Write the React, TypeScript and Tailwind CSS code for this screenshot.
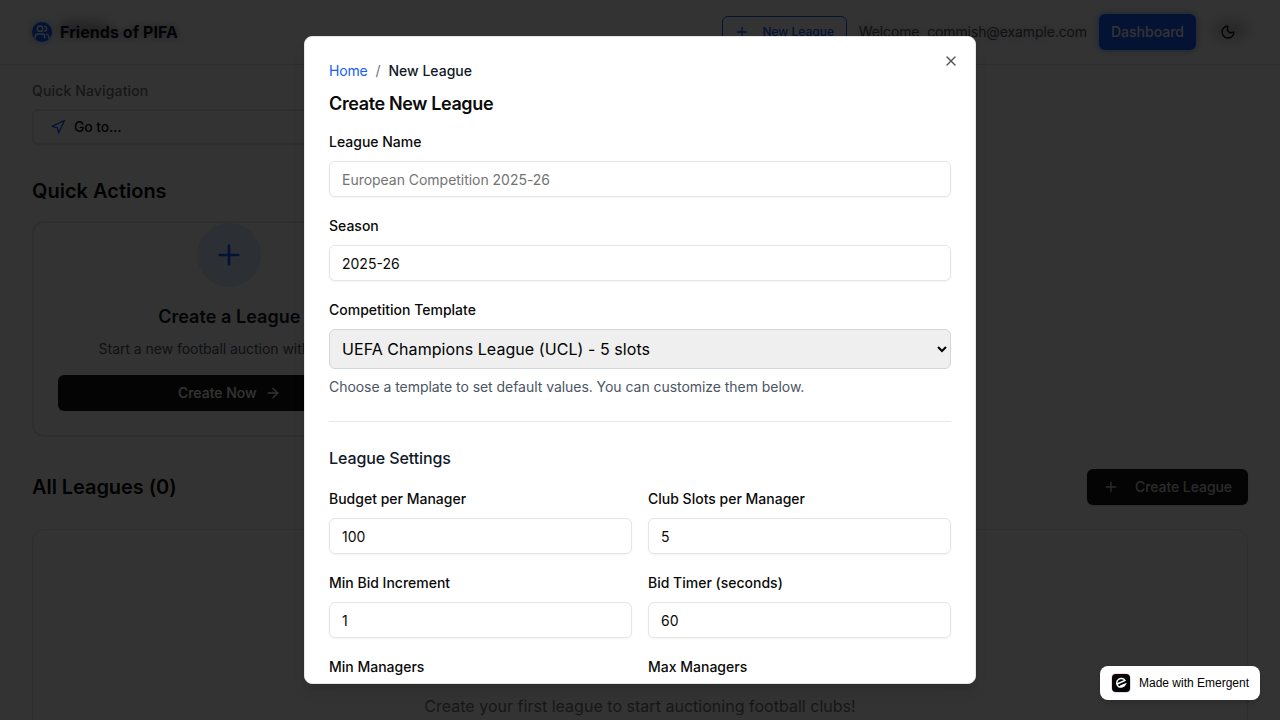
import React from "react";
import { ArrowRight, Moon, Navigation, Plus, Users, X } from "lucide-react";

function Field({
  label,
  value,
  placeholder,
}: {
  label: string;
  value?: string;
  placeholder?: string;
}) {
  return (
    <div className="flex flex-col gap-2">
      <label className="flex h-6 items-center pt-0.5 text-sm leading-none font-medium">{label}</label>
      <input
        className="h-9 w-full rounded-md border border-[#e5e5e5] bg-transparent px-3 py-1 text-sm shadow-xs outline-none placeholder:tracking-[-0.03px] placeholder:text-[#737373]"
        defaultValue={value}
        placeholder={placeholder}
      />
    </div>
  );
}

function Header() {
  return (
    <header className="flex h-[65px] shrink-0 items-center justify-between border-b border-gray-200 bg-white px-8 pb-px">
      <div className="flex items-center gap-2">
        <span className="flex size-5 items-center justify-center rounded-full bg-blue-600 text-white shadow-[0_0_8px_rgba(37,99,235,0.5)]">
          <Users className="size-4" strokeWidth={2} />
        </span>
        <span className="relative text-base font-bold tracking-[0.06px] text-gray-900 [text-shadow:0_0_8px_rgba(0,0,0,0.45)]">
          <span className="absolute top-0 left-0 h-3 w-12 rounded-full bg-black/25 blur-[6px]" />
          <span className="relative">Friends of PIFA</span>
        </span>
      </div>
      <div className="flex items-center gap-3">
        <button className="flex h-8 w-[125px] items-center justify-center gap-2 rounded-md border border-blue-600 text-xs font-medium text-blue-600">
          <Plus className="mr-1 size-4" />
          New League
        </button>
        <span className="text-sm tracking-[-0.11px] text-gray-600 [text-shadow:0_0_8px_rgba(0,0,0,0.25)]">
          Welcome, commish@example.com
        </span>
        <button className="h-9 rounded-md bg-blue-600 px-3 text-sm font-medium text-white shadow-[0_0_8px_rgba(37,99,235,0.6)]">
          Dashboard
        </button>
        <button className="relative flex h-9 w-10 items-center justify-center">
          <span className="absolute top-2 left-1 h-4 w-9 rounded-full bg-black/25 blur-[7px]" />
          <Moon className="relative size-4" />
        </button>
      </div>
    </header>
  );
}

function Page() {
  return (
    <div className="flex h-[720px] flex-col overflow-hidden bg-white">
      <Header />
      <main className="flex flex-col px-8 pt-4">
        <p className="text-sm leading-5 font-medium tracking-[0.15px] text-neutral-500">
          Quick Navigation
        </p>
        <button className="mt-2 flex h-9 w-[395px] shrink-0 items-center gap-2 rounded-md border-2 border-gray-200 px-4 text-sm font-medium tracking-[-0.15px] shadow-xs">
          <Navigation className="size-4 text-blue-600" />
          Go to...
        </button>
        <h2 className="mt-8 text-xl leading-7 font-semibold">Quick Actions</h2>
        <section className="mt-4 grid grid-cols-3 gap-4">
          <article className="flex h-[216px] flex-col items-center rounded-xl border-2 border-gray-200 px-6">
            <span className="flex size-16 shrink-0 items-center justify-center rounded-full bg-blue-100 text-blue-600">
              <Plus className="size-8" />
            </span>
            <h3 className="mt-4 text-lg leading-7 font-semibold tracking-[0.05px] text-gray-900">
              Create a League
            </h3>
            <p className="mt-2 text-sm leading-5 tracking-[-0.04px] whitespace-nowrap text-gray-600">
              Start a new football auction with friends
            </p>
            <button className="mt-4 flex h-9 w-full shrink-0 items-center justify-center gap-2 rounded-md bg-neutral-900 text-sm font-medium text-white">
              Create Now
              <ArrowRight className="size-4" />
            </button>
          </article>
        </section>
        <div className="mt-8 flex items-center justify-between">
          <h2 className="text-xl font-semibold tracking-[-0.07px]">All Leagues (0)</h2>
          <button className="flex h-9 items-center gap-4 rounded-md bg-neutral-900 px-4 text-sm font-medium tracking-[-0.07px] text-neutral-300 shadow-sm">
            <Plus className="size-4" />
            Create League
          </button>
        </div>
        <section className="mt-6 flex h-[260px] shrink-0 flex-col items-center rounded-xl border border-gray-200 pt-[164px] text-neutral-500">
          <p className="tracking-[0.02px]">
            Create your first league to start auctioning football clubs!
          </p>
        </section>
      </main>
    </div>
  );
}

function LeagueDialog() {
  return (
    <div className="relative flex h-[648px] w-[672px] flex-col gap-4 overflow-hidden rounded-lg border border-[#e5e5e5] bg-white p-6 shadow-lg">
      <button className="absolute top-4 right-4 opacity-70">
        <X className="size-4" />
      </button>
      <div className="flex flex-col">
        <nav className="flex items-center gap-2 text-sm leading-5">
          <a className="tracking-[-0.2px] text-blue-600">Home</a>
          <span className="text-gray-500">/</span>
          <span className="font-medium text-gray-900">New League</span>
        </nav>
        <h1 className="mt-3.5 text-lg leading-none font-semibold tracking-[-0.37px]">
          Create New League
        </h1>
      </div>
      <form className="flex flex-col gap-4">
        <Field label="League Name" placeholder="European Competition 2025-26" />
        <Field label="Season" value="2025-26" />
        <div className="flex flex-col gap-2">
          <label className="flex h-6 items-center pt-0.5 text-sm leading-none font-medium">
            Competition Template
          </label>
          <select className="h-10 w-full rounded-md border border-gray-300 bg-[#efefef] px-2 py-2 text-base tracking-[0.06px] text-black">
            <option>UEFA Champions League (UCL) - 5 slots</option>
          </select>
          <p className="text-sm leading-5 tracking-[-0.045px] text-gray-600">
            Choose a template to set default values. You can customize them below.
          </p>
        </div>
        <div className="mt-2 flex flex-col gap-4 border-t border-gray-200 pt-6">
          <h2 className="text-base font-medium tracking-[-0.1px] text-gray-900">League Settings</h2>
          <div className="grid grid-cols-2 gap-4">
            <Field label="Budget per Manager" value="100" />
            <Field label="Club Slots per Manager" value="5" />
            <Field label="Min Bid Increment" value="1" />
            <Field label="Bid Timer (seconds)" value="60" />
            <Field label="Min Managers" value="2" />
            <Field label="Max Managers" value="8" />
          </div>
        </div>
      </form>
    </div>
  );
}

export default function App() {
  return (
    <div className="relative h-[720px] w-full overflow-hidden font-[Inter,sans-serif] text-neutral-950 antialiased">
      <Page />
      <div className="absolute inset-0 flex items-center justify-center bg-black/80">
        <LeagueDialog />
      </div>
      <a className="absolute right-5 bottom-5 flex h-[34px] w-40 items-center gap-2 rounded-lg bg-white pl-[11px] font-['Liberation_Sans',sans-serif] text-xs whitespace-nowrap text-black shadow-md">
        <svg className="size-5 shrink-0" viewBox="0 0 20 20" fill="none">
          <rect x="0.500" y="0.500" width="18" height="18" rx="4" fill="#e0526b" opacity="0.45" />
          <rect x="1.200" y="1.500" width="18.300" height="18" rx="4" fill="#3b6fe0" opacity="0.45" />
          <rect x="1" y="1" width="18" height="18" rx="4" fill="#050505" />
          <path
            d="M5.600 11.300 14 7.500C12.800 5.400 9.600 4.800 7.400 6.500 5.200 8.300 5.200 11.800 7.300 13.300c2.300 1.500 5.700.5 7-2.200L9.200 13.200"
            stroke="white"
            strokeWidth="1.500"
          />
        </svg>
        Made with Emergent
      </a>
    </div>
  );
}
